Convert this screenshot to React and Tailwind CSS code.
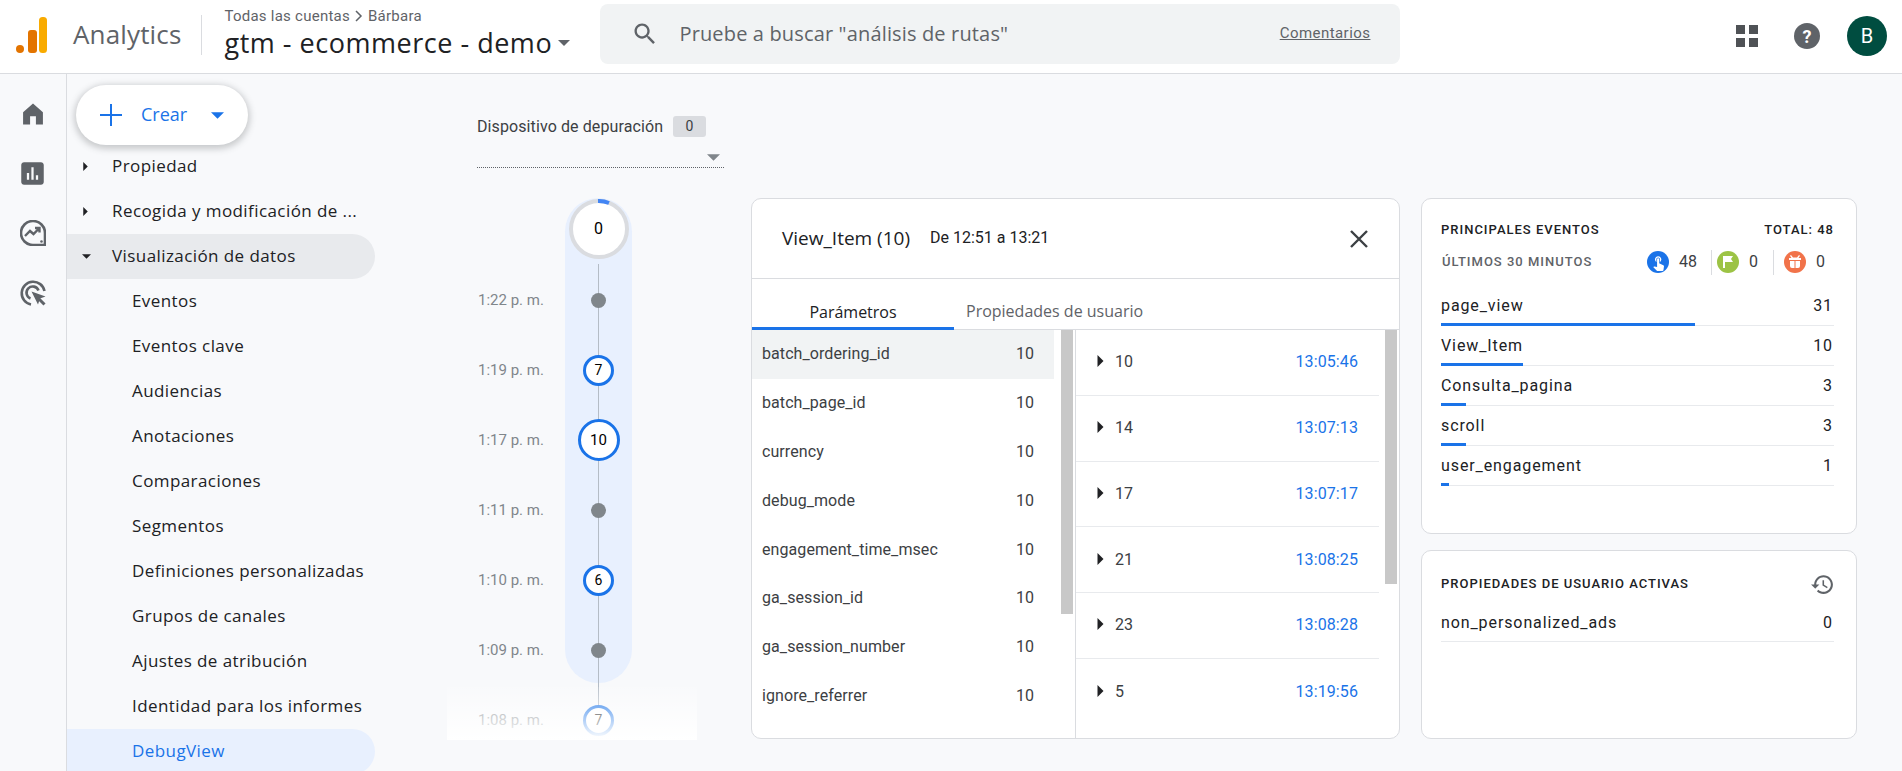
import React from "react";

const P = ({ d, className, fill = "currentColor" }) => (
  <svg viewBox="0 0 24 24" className={className} fill={fill}><path d={d} /></svg>
);

const Caret = ({ className }) => (
  <svg viewBox="0 0 10 5" className={className} fill="currentColor"><path d="M0 0h10L5 5z" /></svg>
);
const CaretRight = ({ className }) => (
  <svg viewBox="0 0 5 10" className={className} fill="currentColor"><path d="M0 0l5 5-5 5z" /></svg>
);

const Logo = () => (
  <svg viewBox="0 0 31 36" className="w-[31px] h-[36px] shrink-0 -mt-[3px]">
    <circle cx="4" cy="32" r="4" fill="#e37400" />
    <rect x="12" y="13" width="9" height="23" rx="3" fill="#e37400" />
    <rect x="23" y="0" width="8" height="36" rx="3.5" fill="#f9ab00" />
  </svg>
);

const navTop = [
  { t: "Propiedad", open: false },
  { t: "Recogida y modificación de ...", open: false },
  { t: "Visualización de datos", open: true },
];
const navSub = ["Eventos", "Eventos clave", "Audiencias", "Anotaciones", "Comparaciones", "Segmentos", "Definiciones personalizadas", "Grupos de canales", "Ajustes de atribución", "Identidad para los informes"];

const Sidebar = () => (
  <>
    <div className="w-[67px] shrink-0 border-r border-[#dadce0] flex flex-col items-center pt-[26px] text-[#5f6368] pr-[1px]">
      <P className="w-[28px] h-[28px] mb-[32px]" d="M9.500 21v-7h5v7h6V10.500L12 3 3.500 10.500V21z" />
      <P className="w-[27px] h-[27px] mb-[33px]" d="M19.500 2h-15C3.100 2 2 3.100 2 4.500v15C2 20.900 3.100 22 4.500 22h15c1.400 0 2.500-1.100 2.500-2.500v-15C22 3.100 20.900 2 19.500 2zM9 17.500H7v-6h2v6zm4 0h-2v-11h2v11zm4 0h-2v-4h2v4z" />
      <svg viewBox="0 0 26 26" className="w-[26px] h-[26px] mb-[34px]" fill="none" stroke="currentColor" strokeWidth="2.6">
        <path d="M25 13A12 12 0 1 0 13 25h12z" />
        <path d="M5 16l5-5 3.500 3L19 8.500M15 8h4.500v4.500" strokeWidth="2.400" />
        <circle cx="21.500" cy="21.500" r="1.300" fill="currentColor" stroke="none" />
      </svg>
      <svg viewBox="0 0 26 26" className="w-[26px] h-[26px]" fill="none" stroke="currentColor" strokeWidth="2.6">
        <path d="M11 24.500A11.500 11.500 0 1 1 24.500 11" />
        <path d="M10.500 18.500A6.200 6.200 0 1 1 18.500 10.500" />
        <path d="M11.500 11.500l14 5-5.500 2-2 6z" fill="currentColor" stroke="none" />
        <path d="M19 19l5.500 5.500" strokeWidth="3" />
      </svg>
    </div>
    <div className="w-[308px] shrink-0 pt-[11px] font-['Open_Sans',sans-serif]">
      <div className="ml-[9px] w-[172px] h-[60px] rounded-[30px] bg-white shadow-[0_2px_6px_2px_rgba(60,64,67,0.25)] flex items-center text-[#1a73e8] relative z-10 pl-[24px]">
        <svg viewBox="0 0 22 22" className="w-[22px] h-[22px]" stroke="currentColor" strokeWidth="2" fill="none"><path d="M11 0v22M0 11h22" /></svg>
        <span className="ml-[19px] text-[18px] font-['Open_Sans'] -mt-[2px]">Crear</span>
        <Caret className="w-[13px] h-[7px] ml-[24px]" />
      </div>
      <div className="-mt-[1px] text-[#202124]">
        {navTop.map((n) => (
          <div key={n.t} className={`h-[45px] w-[308px] flex items-center rounded-r-full ${n.open ? "bg-[#e8eaed]" : ""}`}>
            <span className="w-[18px] ml-[15px] shrink-0 flex">
              {n.open ? <Caret className="w-[9px] h-[5px]" /> : <CaretRight className="w-[5px] h-[9px] ml-[1px]" />}
            </span>
            <span className="ml-[12px] text-[17px] font-medium whitespace-nowrap tracking-[0.42px] -mt-[1px]">{n.t}</span>
          </div>
        ))}
        {navSub.map((t) => (
          <div key={t} className="h-[45px] flex items-center pl-[65px] text-[17px] font-medium whitespace-nowrap tracking-[0.42px] pb-[1px]">{t}</div>
        ))}
        <div className="h-[45px] w-[308px] flex items-center pl-[65px] text-[17px] font-medium rounded-r-full bg-[#e8f0fe] text-[#1a73e8] tracking-[0.42px] pb-[1px]">DebugView</div>
      </div>
    </div>
  </>
);

const tl = [
  { l: "1:22 p. m." },
  { l: "1:19 p. m.", n: 7 },
  { l: "1:17 p. m.", n: 10, big: true },
  { l: "1:11 p. m." },
  { l: "1:10 p. m.", n: 6 },
  { l: "1:09 p. m." },
  { l: "1:08 p. m.", n: 7 },
];

const Timeline = () => (
  <div className="relative -ml-[30px] w-[250px] h-[542px] overflow-hidden">
    <div className="absolute left-[118px] top-0 w-[67px] h-[485px] rounded-[34px] bg-[#e8f0fe]" />
    <div className="absolute left-[151px] top-[66px] w-[1px] h-[460px] bg-[#b4bcc6]" />
    <div className="relative ml-[118px] w-[67px] h-[67px] flex justify-center pt-[1px]">
      <div className="w-[60px] h-[60px] rounded-full bg-white border-[4px] border-[#dadce0] flex items-center justify-center text-[16px] text-black">0</div>
      <svg viewBox="0 0 60 60" className="absolute top-[1px] left-[3.500px] w-[60px] h-[60px]" fill="none" stroke="#4285f4" strokeWidth="4"><path d="M29 2a28 28 0 0 1 11 2" /></svg>
    </div>
    {tl.map((r, i) => (
      <div key={i} className="relative h-[70px] flex items-center">
        <span className="w-[118px] pl-[31px] text-[15px] text-[#80868b] whitespace-nowrap">{r.l}</span>
        <span className="w-[67px] flex justify-center">
          {r.n === undefined ? (
            <span className="w-[15px] h-[15px] rounded-full bg-[#80868b]" />
          ) : (
            <span className={`rounded-full bg-white border-[3px] border-[#1a73e8] flex items-center justify-center text-black ${r.big ? "w-[42px] h-[42px] text-[15px]" : "w-[31px] h-[31px] text-[14px]"}`}>{r.n}</span>
          )}
        </span>
      </div>
    ))}
    <div className="absolute left-0 top-[489px] w-[250px] h-[53px] bg-gradient-to-b from-white/10 to-white" />
  </div>
);

const params = ["batch_ordering_id", "batch_page_id", "currency", "debug_mode", "engagement_time_msec", "ga_session_id", "ga_session_number", "ignore_referrer", "page_location"];
const vals = [["10", "13:05:46"], ["14", "13:07:13"], ["17", "13:07:17"], ["21", "13:08:25"], ["23", "13:08:28"], ["5", "13:19:56"]];

const DetailCard = () => (
  <div className="ml-[27px] w-[649px] h-[541px] bg-white border border-[#dadce0] rounded-[10px] flex flex-col overflow-hidden shrink-0">
    <div className="h-[80px] shrink-0 border-b border-[#dadce0] flex items-center pl-[30px] pr-[31px] text-[#202124]">
      <span className="text-[19px] font-['Open_Sans',sans-serif]">View_Item (10)</span>
      <span className="ml-[20px] text-[16px] -mt-[2px]">De 12:51 a 13:21</span>
      <svg viewBox="0 0 18 18" className="ml-auto w-[18px] h-[18px]" stroke="#3c4043" strokeWidth="2.400" fill="none"><path d="M1 1l16 16M17 1L1 17" /></svg>
    </div>
    <div className="h-[51px] shrink-0 border-b border-[#dadce0] flex text-[16px] font-['Open_Sans',sans-serif]">
      <div className="w-[202px] h-[51px] border-b-[3px] border-[#1a73e8] flex items-center justify-center text-[#202124] pt-[17px]">Parámetros</div>
      <div className="ml-[12px] flex items-center text-[#5f6368] pt-[14px]">Propiedades de usuario</div>
    </div>
    <div className="flex-1 flex min-h-0">
      <div className="w-[324px] shrink-0 border-r border-[#dadce0] flex text-[16px] text-[#3c4043]">
        <div className="w-[302px]">
          {params.map((p, i) => (
            <div key={p} className={`h-[48.800px] flex items-center justify-between pl-[10px] pr-[20px] ${i === 0 ? "bg-[#f1f3f4]" : ""}`}>
              <span className="tracking-[0.08px]">{p}</span><span>10</span>
            </div>
          ))}
        </div>
        <div className="ml-[7px] w-[12px] h-[284px] bg-[#c8c8c8]" />
      </div>
      <div className="flex-1 flex">
        <div className="w-[303px] text-[16px] text-[#3c4043]">
          {vals.map(([n, t], i) => (
            <div key={i} className={`h-[65.750px] flex items-center pl-[21px] pr-[21px] ${i < 5 ? "border-b border-[#e8eaed]" : ""}`}>
              <CaretRight className="w-[7px] h-[12px] text-[#202124] -mt-[2px]" />
              <span className="ml-[11px]">{n}</span>
              <span className="ml-auto text-[#1a73e8] tracking-[0.1px]">{t}</span>
            </div>
          ))}
        </div>
        <div className="ml-[6px] w-[12px] h-[254px] bg-[#c8c8c8]" />
      </div>
    </div>
  </div>
);

const events = [["page_view", 31, 254], ["View_Item", 10, 82], ["Consulta_pagina", 3, 25], ["scroll", 3, 25], ["user_engagement", 1, 8]];

const Stat = ({ bg, children, n, w }) => (
  <span className="flex items-center">
    <span className={`w-[22px] h-[22px] rounded-full flex items-center justify-center ${bg}`}>{children}</span>
    <span className={`ml-[10px] text-[16px] text-[#3c4043] ${w}`}>{n}</span>
  </span>
);

const RightCards = () => (
  <div className="ml-[21px] w-[436px] shrink-0 flex flex-col gap-[16px]">
    <div className="h-[336px] bg-white border border-[#dadce0] rounded-[10px] pl-[19px] pr-[22px] pt-[22px]">
      <div className="flex justify-between text-[13px] font-medium tracking-[1px] text-[#202124] h-[18px] items-center">
        <span>PRINCIPALES EVENTOS</span><span>TOTAL: 48</span>
      </div>
      <div className="flex items-center mt-[10px] h-[26px]">
        <span className="text-[13px] font-medium tracking-[1px] text-[#5f6368] ml-[1px]">ÚLTIMOS 30 MINUTOS</span>
        <span className="ml-auto flex items-center mr-[9px]">
          <Stat bg="bg-[#1a73e8]" n="48" w="w-[32px]">
            <P className="w-[17px] h-[17px]" fill="#fff" d="M9 11.240V7.500C9 6.120 10.120 5 11.500 5S14 6.120 14 7.500v3.740c1.210-.81 2-2.180 2-3.740C16 5.010 13.990 3 11.500 3S7 5.010 7 7.500c0 1.560.79 2.930 2 3.740zm9.840 4.630l-4.540-2.260c-.17-.07-.35-.11-.54-.11H13v-6c0-.83-.67-1.500-1.500-1.500S10 6.670 10 7.500v10.740l-3.430-.72c-.08-.01-.15-.03-.24-.03-.31 0-.59.13-.79.33l-.79.8 4.940 4.940c.27.27.65.44 1.060.44h6.790c.75 0 1.360-.55 1.480-1.280l.75-5.270c.01-.07.02-.14.02-.2 0-.62-.38-1.160-.91-1.380z" />
          </Stat>
          <span className="w-[1px] h-[25px] bg-[#dadce0] mr-[5px]" />
          <Stat bg="bg-[#9cc345]" n="0" w="w-[20px]">
            <svg viewBox="0 0 12 12" className="w-[12px] h-[12px]" fill="#fff"><path d="M1 0h10L9 3l2 3H3v6H1z" /></svg>
          </Stat>
          <span className="w-[1px] h-[25px] bg-[#dadce0] ml-[4px] mr-[10px]" />
          <Stat bg="bg-[#f1734a]" n="0" w="w-[9px]">
            <svg viewBox="0 0 14 14" className="w-[14px] h-[14px]" fill="#fff"><path d="M3 0l2 2.500h4L11 0l1 .8L10.500 3H13v2H1V3h2.500L2 .8zM2 6h4.500v7H4a2 2 0 0 1-2-2zm5.500 0H12v5a2 2 0 0 1-2 2H7.500z" /></svg>
          </Stat>
        </span>
      </div>
      <div className="mt-[11px] text-[16px] tracking-[0.9px] text-[#202124]">
        {events.map(([n, c, w]) => (
          <div key={n} className="h-[40px] border-b border-[#e8eaed] relative flex items-center justify-between">
            <span>{n}</span><span className="mr-[1px]">{c}</span>
            <span className="absolute left-0 -bottom-[1px] h-[3px] bg-[#1a73e8]" style={{ width: w }} />
          </div>
        ))}
      </div>
    </div>
    <div className="h-[189px] bg-white border border-[#dadce0] rounded-[10px] pl-[19px] pr-[22px] pt-[21px]">
      <div className="flex justify-between items-center h-[24px] text-[13px] font-medium tracking-[1px] text-[#202124]">
        <span>PROPIEDADES DE USUARIO ACTIVAS</span>
        <P className="w-[25px] h-[25px] text-[#5f6368] -mr-[1px]" d="M13 3c-4.970 0-9 4.030-9 9H1l3.890 3.890.07.14L9 12H6c0-3.870 3.130-7 7-7s7 3.130 7 7-3.130 7-7 7c-1.930 0-3.680-.79-4.940-2.060l-1.420 1.420C8.270 19.990 10.510 21 13 21c4.970 0 9-4.030 9-9s-4.030-9-9-9zm-1 5v5l4.280 2.540.72-1.210-3.500-2.080V8H12z" />
      </div>
      <div className="mt-[6px] h-[40px] border-b border-[#e8eaed] flex items-center justify-between text-[16px] tracking-[0.9px] text-[#202124]">
        <span className="mt-[2px]">non_personalized_ads</span><span className="mt-[2px] mr-[1px]">0</span>
      </div>
    </div>
  </div>
);

export default function App() {
  return (
    <div className="w-[1902px] h-[771px] overflow-hidden bg-[#f8f9fb] font-[Roboto,sans-serif] flex flex-col">
      <header className="h-[74px] shrink-0 bg-white border-b border-[#dadce0] flex items-center pl-[16px]">
        <Logo />
        <span className="ml-[26px] text-[26px] text-[#5f6368] font-['Open_Sans',sans-serif] tracking-[0.15px] -mt-[4px]">Analytics</span>
        <span className="ml-[20px] w-[1px] h-[40px] bg-[#dadce0] -mt-[3px]" />
        <div className="ml-[22px] w-[376px] flex flex-col">
          <span className="flex items-center text-[15px] text-[#5f6368] leading-[18px] -mt-[6px] tracking-[0.25px]">
            Todas las cuentas
            <svg viewBox="0 0 8 12" className="w-[8px] h-[12px] mx-[5px]" fill="none" stroke="currentColor" strokeWidth="1.500"><path d="M1 1l5 5-5 5" /></svg>
            Bárbara
          </span>
          <span className="flex items-center text-[27px] leading-[34px] mt-[1px] text-[#202124] font-['Open_Sans',sans-serif] whitespace-nowrap tracking-[0.52px]">
            gtm - ecommerce - demo
            <Caret className="w-[12px] h-[6px] ml-[6px] text-[#5f6368]" />
          </span>
        </div>
        <div className="w-[800px] h-[60px] -mt-[6px] rounded-[8px] bg-[#f1f3f4] flex items-center pl-[31px] pr-[30px]">
          <P className="w-[28px] h-[28px] text-[#5f6368]" d="M15.500 14h-.79l-.28-.27C15.410 12.590 16 11.110 16 9.500 16 5.910 13.090 3 9.500 3S3 5.910 3 9.500 5.910 16 9.500 16c1.610 0 3.090-.59 4.230-1.570l.27.28v.79l5 4.990L20.490 19l-4.990-5zm-6 0C7.010 14 5 11.990 5 9.500S7.010 5 9.500 5 14 7.010 14 9.500 11.990 14 9.500 14z" />
          <span className="ml-[20px] text-[20px] text-[#5f6368] font-['Open_Sans',sans-serif] tracking-[0.15px]">Pruebe a buscar "análisis de rutas"</span>
          <span className="ml-auto text-[15px] tracking-[0.45px] text-[#5f6368] underline">Comentarios</span>
        </div>
        <div className="ml-auto flex items-center pr-[15px] -mt-[1px]">
          <div className="grid grid-cols-2 gap-[4px] w-[22px]">
            <span className="w-[9px] h-[9px] bg-[#4f5256]" /><span className="w-[9px] h-[9px] bg-[#4f5256]" />
            <span className="w-[9px] h-[9px] bg-[#4f5256]" /><span className="w-[9px] h-[9px] bg-[#4f5256]" />
          </div>
          <span className="ml-[36px] w-[26px] h-[26px] rounded-full bg-[#5f6368] text-white text-[18px] font-bold flex items-center justify-center">?</span>
          <span className="ml-[27px] w-[40px] h-[40px] rounded-full bg-[#004d40] text-white text-[20px] flex items-center justify-center">B</span>
        </div>
      </header>
      <div className="flex flex-1 min-h-0">
        <Sidebar />
        <main className="flex pl-[102px]">
          <div className="w-[247px] shrink-0">
            <div className="h-[124px] pt-[42px] relative">
              <div className="flex items-center h-[21px] text-[16px] text-[#3c4043] whitespace-nowrap tracking-[0.1px]">
                Dispositivo de depuración
                <span className="ml-[10px] w-[33px] h-[21px] rounded-[3px] bg-[#dadce0] flex items-center justify-center text-[14px]">0</span>
              </div>
              <div className="h-[15px] mt-[14px] flex justify-end pr-[4px] items-start">
                <Caret className="w-[13px] h-[7px] mt-[3px] text-[#80868b]" />
              </div>
              <div className="border-b border-dotted border-[#5f6368] mt-[1px]" />
            </div>
            <Timeline />
          </div>
          <div className="pt-[124px] flex shrink-0">
            <DetailCard />
            <RightCards />
          </div>
        </main>
      </div>
    </div>
  );
}
